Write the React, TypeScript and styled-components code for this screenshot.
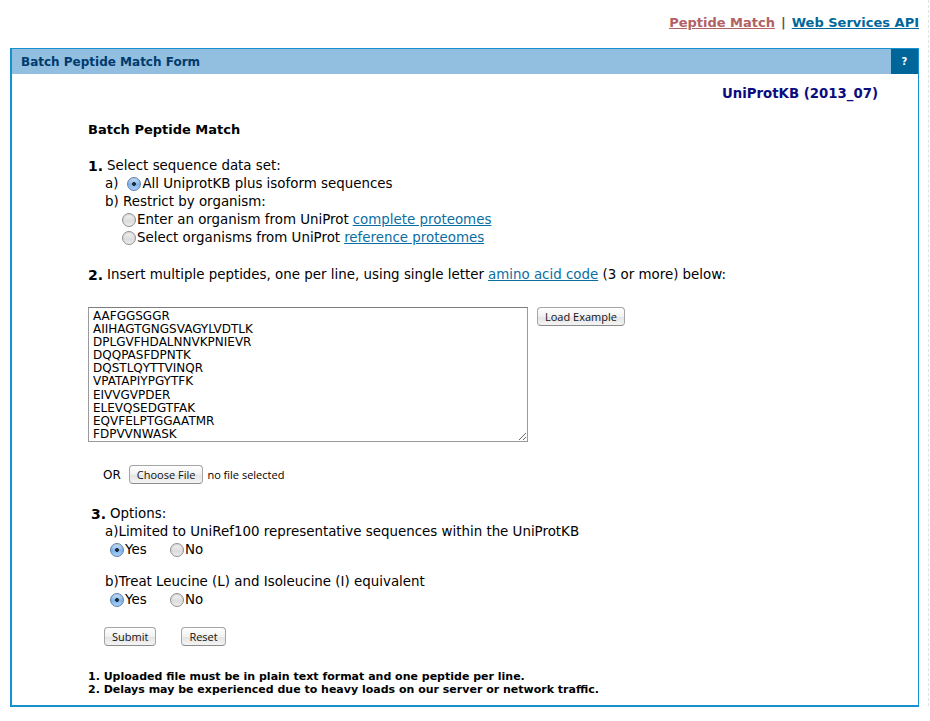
import React from "react";
import styled, { createGlobalStyle } from "styled-components";

const Global = createGlobalStyle`
  html, body { margin: 0; padding: 0; background: #fff; }
  body { font-family: "DejaVu Sans", Verdana, sans-serif; color: #000; }
`;

const Page = styled.div`
  width: 930px;
  position: relative;
`;

const ScrollHint = styled.div`
  position: absolute;
  right: 1px;
  top: 0;
  height: 721px;
  border-left: 1px dashed #e2e2e2;
`;

const TopNav = styled.div`
  display: flex;
  justify-content: flex-end;
  align-items: center;
  gap: 6px;
  height: 48px;
  padding: 0 11px 4px 0;
  font-size: 13px;
  font-weight: bold;
  box-sizing: border-box;
`;

const NavLink = styled.a<{ $visited?: boolean }>`
  color: ${(p) => (p.$visited ? "#b26163" : "#00679c")};
  text-decoration: underline;
  cursor: pointer;
`;

const Sep = styled.span`
  color: #555;
`;

const Panel = styled.div`
  margin: 0 11px 0 10px;
  border: 1px solid #1591d2;
  border-left-width: 2px;
  border-bottom-width: 2px;
`;

const PanelHead = styled.div`
  display: flex;
  align-items: stretch;
  height: 25px;
  background: #92bedf;
`;

const PanelTitle = styled.div`
  flex: 1;
  display: flex;
  align-items: center;
  padding-left: 9px;
  font-size: 12px;
  font-weight: bold;
  color: #003b6e;
`;

const Help = styled.div`
  width: 27px;
  background: #006699;
  color: #fff;
  font-size: 10px;
  font-weight: bold;
  display: flex;
  align-items: center;
  justify-content: center;
`;

const Body = styled.div`
  padding: 0 0 9px 76px;
`;

const DbLabel = styled.div`
  text-align: right;
  padding: 11px 40px 0 0;
  font-size: 13.3px;
  font-weight: bold;
  color: #0c0c7f;
  line-height: 18px;
`;

const Heading = styled.div`
  margin-top: 18px;
  font-size: 13px;
  font-weight: bold;
  line-height: 18px;
`;

const Section = styled.div<{ $top: number; $indent?: number }>`
  margin-top: ${(p) => p.$top}px;
  margin-left: ${(p) => p.$indent || 0}px;
  font-size: 13.4px;
  line-height: 18px;
`;

const Num = styled.b`
  font-size: 14px;
  margin-right: 4px;
`;

const Line = styled.div<{ $indent: number }>`
  padding-left: ${(p) => p.$indent}px;
  display: flex;
  align-items: center;
  white-space: nowrap;
`;

const Link = styled.a`
  color: #0b6ea3;
  text-decoration: underline;
  margin-left: 4px;
  cursor: pointer;
`;

const Radio = styled.span<{ $on?: boolean; $gap?: number }>`
  display: inline-block;
  box-sizing: border-box;
  width: 14px;
  height: 14px;
  border-radius: 50%;
  border: 1px solid ${(p) => (p.$on ? "#5a7fae" : "#8f8f8f")};
  background: ${(p) =>
    p.$on
      ? "radial-gradient(circle at 50% 50%, #1d2b3d 0 1.6px, transparent 2.2px), linear-gradient(#cfe4fb, #7eb3ea 55%, #aad1f7)"
      : "linear-gradient(#f3f3f3, #dcdcdc 60%, #ededed)"};
  box-shadow: inset 0 1px 1px rgba(0,0,0,0.12);
  margin-left: ${(p) => p.$gap || 0}px;
  margin-right: 1px;
  flex: none;
`;

const InputRow = styled.div`
  margin-top: 23px;
  display: flex;
  align-items: flex-start;
  gap: 9px;
`;

const Area = styled.textarea`
  width: 440px;
  height: 135px;
  box-sizing: border-box;
  border: 1px solid #9a9a9a;
  border-top-color: #7e7e7e;
  padding: 2px 4px;
  margin: 0;
  font-family: "DejaVu Sans", sans-serif;
  font-size: 12px;
  line-height: 13.1px;
  color: #000;
  resize: both;
  overflow: hidden;
`;

const MacButton = styled.button`
  font-family: "Open Sans", "Liberation Sans", sans-serif;
  font-size: 11px;
  height: 19px;
  padding: 0 7px;
  border: 1px solid #a5a5a5;
  border-bottom-color: #8c8c8c;
  border-radius: 4px;
  background: linear-gradient(#ffffff, #f1f1f1 50%, #e3e3e3 51%, #f4f4f4);
  color: #111;
  line-height: 16px;
  cursor: pointer;
`;

const FileRow = styled.div`
  margin-top: 23px;
  margin-left: 15px;
  display: flex;
  align-items: center;
  font-size: 12px;
  font-family: "DejaVu Sans", sans-serif;
`;

const Or = styled.span`
  margin-right: 8px;
`;

const NoFile = styled.span`
  font-family: "Open Sans", "Liberation Sans", sans-serif;
  font-size: 11px;
  margin-left: 4px;
`;

const OptGroup = styled.div<{ $top: number }>`
  margin-top: ${(p) => p.$top}px;
  padding-left: 17px;
`;

const OptRow = styled.div`
  display: flex;
  align-items: center;
  padding-left: 5px;
  line-height: 17px;
`;

const OptItem = styled.span<{ $w: number }>`
  display: inline-flex;
  align-items: center;
  width: ${(p) => p.$w}px;
`;

const Buttons = styled.div`
  margin-top: 19px;
  margin-left: 16px;
  display: flex;
  gap: 25px;
`;

const Notes = styled.div`
  margin-top: 24px;
  font-size: 11px;
  font-weight: bold;
  line-height: 13px;
`;

const peptides = [
  "AAFGGSGGR",
  "AIIHAGTGNGSVAGYLVDTLK",
  "DPLGVFHDALNNVKPNIEVR",
  "DQQPASFDPNTK",
  "DQSTLQYTTVINQR",
  "VPATAPIYPGYTFK",
  "EIVVGVPDER",
  "ELEVQSEDGTFAK",
  "EQVFELPTGGAATMR",
  "FDPVVNWASK",
].join("\n");

export default function App() {
  return (
    <Page>
      <Global />
      <ScrollHint />
      <TopNav>
        <NavLink $visited>Peptide Match</NavLink>
        <Sep>|</Sep>
        <NavLink>Web Services API</NavLink>
      </TopNav>
      <Panel>
        <PanelHead>
          <PanelTitle>Batch Peptide Match Form</PanelTitle>
          <Help>?</Help>
        </PanelHead>
        <DbLabel>UniProtKB (2013_07)</DbLabel>
        <Body>
          <Heading>Batch Peptide Match</Heading>
          <Section $top={18}>
            <Line $indent={0}>
              <Num>1.</Num>Select sequence data set:
            </Line>
            <Line $indent={17}>
              a)<Radio $on $gap={9} />All UniprotKB plus isoform sequences
            </Line>
            <Line $indent={17}>b) Restrict by organism:</Line>
            <Line $indent={34}>
              <Radio />Enter an organism from UniProt
              <Link>complete proteomes</Link>
            </Line>
            <Line $indent={34}>
              <Radio />Select organisms from UniProt
              <Link>reference proteomes</Link>
            </Line>
          </Section>
          <Section $top={19}>
            <Line $indent={0}>
              <Num>2.</Num>Insert multiple peptides, one per line, using single letter
              <Link>amino acid code</Link>&nbsp;(3 or more) below:
            </Line>
          </Section>
          <InputRow>
            <Area defaultValue={peptides} spellCheck={false} />
            <MacButton>Load Example</MacButton>
          </InputRow>
          <FileRow>
            <Or>OR</Or>
            <MacButton>Choose File</MacButton>
            <NoFile>no file selected</NoFile>
          </FileRow>
          <Section $top={21} $indent={3}>
            <Line $indent={0}>
              <Num>3.</Num>Options:
            </Line>
          </Section>
          <Section $top={0}>
            <OptGroup $top={0}>
              a)Limited to UniRef100 representative sequences within the UniProtKB
              <OptRow>
                <OptItem $w={60}><Radio $on />Yes</OptItem>
                <OptItem $w={60}><Radio />No</OptItem>
              </OptRow>
            </OptGroup>
            <OptGroup $top={15}>
              b)Treat Leucine (L) and Isoleucine (I) equivalent
              <OptRow>
                <OptItem $w={60}><Radio $on />Yes</OptItem>
                <OptItem $w={60}><Radio />No</OptItem>
              </OptRow>
            </OptGroup>
          </Section>
          <Buttons>
            <MacButton>Submit</MacButton>
            <MacButton>Reset</MacButton>
          </Buttons>
          <Notes>
            <div>1. Uploaded file must be in plain text format and one peptide per line.</div>
            <div>2. Delays may be experienced due to heavy loads on our server or network traffic.</div>
          </Notes>
        </Body>
      </Panel>
    </Page>
  );
}
